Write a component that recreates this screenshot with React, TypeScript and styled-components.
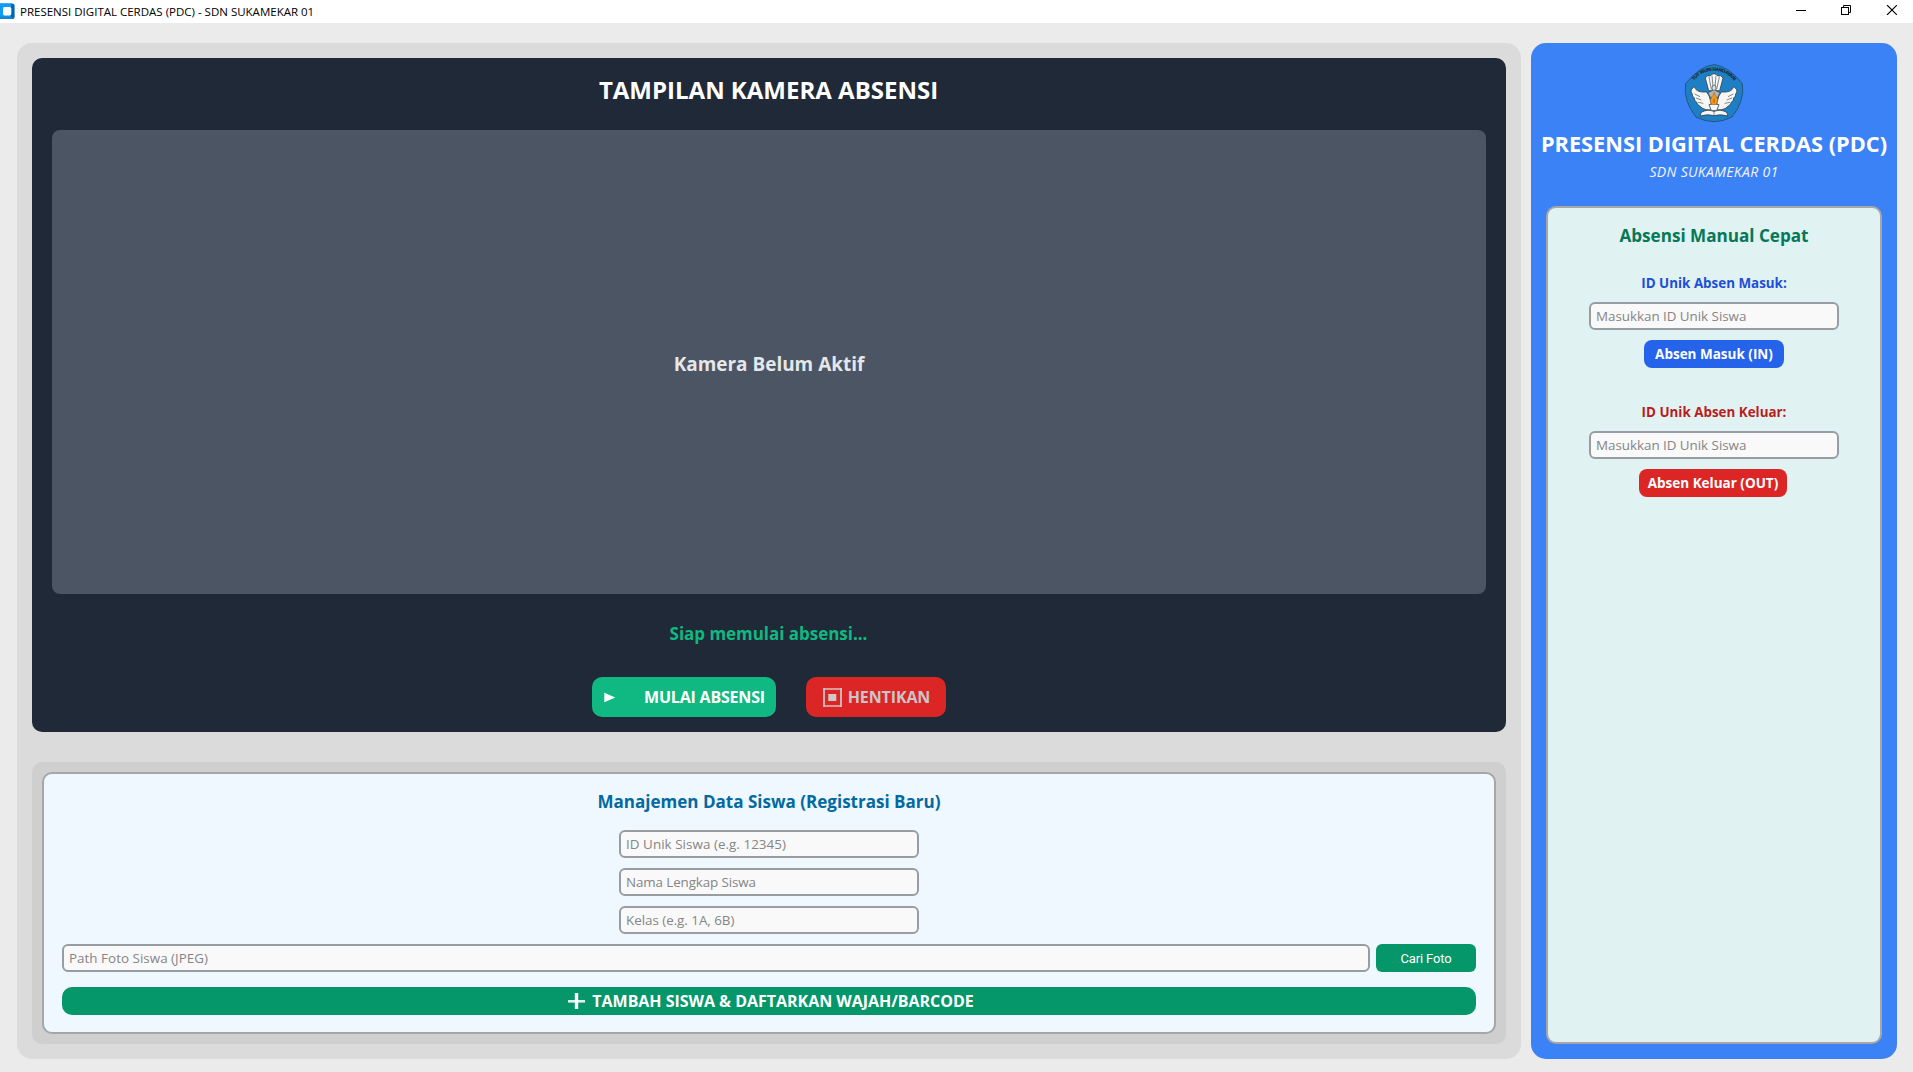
import React from 'react';
import styled, { createGlobalStyle } from 'styled-components';

const GlobalStyle = createGlobalStyle`
  * { box-sizing: border-box; }
  html, body { margin: 0; padding: 0; }
  body {
    background: #ebebeb;
    font-family: "Open Sans", "Noto Sans", sans-serif;
    overflow: hidden;
  }
`;

const Window = styled.div`
  display: flex;
  flex-direction: column;
  width: 100%;
  height: 100vh;
  background: #ebebeb;
`;

const TitleBar = styled.header`
  display: flex;
  align-items: center;
  flex: 0 0 23px;
  background: #ffffff;
  color: #000000;
`;

const TitleText = styled.span`
  flex: 1;
  padding-left: 5px;
  font-size: 11.5px;
  line-height: 23px;
  white-space: nowrap;
`;

const WindowControls = styled.div`
  display: flex;
  gap: 35px;
  padding: 0 16px 3px 0;
  svg { display: block; }
`;

const Main = styled.main`
  display: flex;
  flex: 1;
  gap: 10px;
  padding: 20px 16px 13px 17px;
`;

const LeftPanel = styled.section`
  display: flex;
  flex-direction: column;
  flex: 1;
  gap: 30px;
  padding: 15px;
  border-radius: 15px;
  background: #dbdbdb;
`;

const CameraCard = styled.div`
  display: flex;
  flex-direction: column;
  flex: 1;
  padding: 0 20px 15px;
  border-radius: 10px;
  background: #1f2937;
`;

const Label = styled.div<{
  $size: number;
  $color: string;
  $height: number;
  $track?: number;
  $weight?: number;
  $italic?: boolean;
}>`
  height: ${(p) => p.$height}px;
  line-height: ${(p) => p.$height}px;
  font-size: ${(p) => p.$size}px;
  font-weight: ${(p) => p.$weight ?? 700};
  font-style: ${(p) => (p.$italic ? 'italic' : 'normal')};
  letter-spacing: ${(p) => p.$track ?? 0}px;
  color: ${(p) => p.$color};
  text-align: center;
  white-space: nowrap;
`;

const CameraTitle = styled.div`
  height: 72px;
  padding: 14px 1px 0 0;
`;

const CameraView = styled.div`
  display: flex;
  align-items: center;
  justify-content: center;
  flex: 1;
  padding-top: 3px;
  border-radius: 8px;
  background: #4b5563;
`;

const StatusLine = styled.div`
  height: 83px;
  padding: 22px 1px 0 0;
`;

const ControlRow = styled.div`
  display: flex;
  justify-content: center;
  gap: 30px;
`;

const Button = styled.button<{
  $bg: string;
  $width?: number;
  $height?: number;
  $size?: number;
  $radius?: number;
  $track?: number;
  $color?: string;
  $padding?: string;
}>`
  display: flex;
  align-items: center;
  justify-content: center;
  width: ${(p) => (p.$width ? `${p.$width}px` : '100%')};
  height: ${(p) => p.$height ?? 28}px;
  padding: ${(p) => p.$padding ?? '0'};
  border: none;
  border-radius: ${(p) => p.$radius ?? 8}px;
  background: ${(p) => p.$bg};
  color: ${(p) => p.$color ?? '#ffffff'};
  font-family: inherit;
  font-size: ${(p) => p.$size ?? 13.5}px;
  font-weight: 700;
  letter-spacing: ${(p) => p.$track ?? 0}px;
  white-space: nowrap;
  svg { flex: none; display: block; }
`;

const CheckoutButton = styled(Button)`
  margin-right: 2px;
`;

const BrowseButton = styled(Button)`
  font-family: Roboto, sans-serif;
  font-weight: 400;
`;

const ManageFrame = styled.div`
  flex: 0 0 282px;
  padding: 10px;
  border-radius: 10px;
  background: #cfcfcf;
`;

const ManageCard = styled.div`
  display: flex;
  flex-direction: column;
  align-items: center;
  height: 100%;
  padding: 13px 18px 0;
  border: 2px solid #a6a6a6;
  border-radius: 10px;
  background: #f0f8ff;
`;

const FieldStack = styled.div`
  display: flex;
  flex-direction: column;
  align-items: center;
  gap: 10px;
  width: 100%;
  padding-top: 13px;
`;

const Field = styled.input<{ $width?: number; $track?: number }>`
  width: ${(p) => (p.$width ? `${p.$width}px` : 'auto')};
  flex: ${(p) => (p.$width ? 'none' : '1')};
  height: 28px;
  padding: 0 5px 1px;
  border: 2px solid #979da2;
  border-radius: 6px;
  background: #f9f9fa;
  font-family: inherit;
  font-size: 13.4px;
  letter-spacing: ${(p) => p.$track ?? 0}px;
  outline: none;
  &::placeholder { color: #858585; opacity: 1; }
`;

const PathRow = styled.div`
  display: flex;
  gap: 6px;
  width: 100%;
`;

const SubmitRow = styled.div`
  width: 100%;
  padding-top: 15px;
`;

const SidePanel = styled.aside`
  display: flex;
  flex-direction: column;
  align-items: center;
  flex: 0 0 366px;
  min-width: 0;
  padding: 21px 15px 15px;
  border-radius: 15px;
  background: #3b82f6;
`;

const Brand = styled.div`
  display: flex;
  flex-direction: column;
  align-items: center;
  flex: 0 0 142px;
  svg { display: block; overflow: visible; }
`;

const ManualCard = styled.div`
  display: flex;
  flex-direction: column;
  align-items: center;
  flex: 1;
  width: 100%;
  padding-top: 13px;
  border: 2px solid #a6a6a6;
  border-radius: 10px;
  background: #e0f2f1;
`;

const ManualGroup = styled.div<{ $top: number }>`
  display: flex;
  flex-direction: column;
  align-items: center;
  gap: 10px;
  padding-top: ${(p) => p.$top}px;
`;

function AppIcon() {
  return (
    <svg width="15" height="17" viewBox="0 0 15 17">
      <rect x="-2" y="0.4" width="16.6" height="15.6" rx="2.6" fill="#0067b5" />
      <path d="M0 0.4 H11.2 L10.6 16 H0 Z" fill="#109cfb" />
      <path d="M0 13.4 H11 L13 15.6 L12 16 H0 Z" fill="#1586d4" />
      <rect x="3" y="4" width="8.3" height="8.4" rx="1.6" fill="#ffffff" />
    </svg>
  );
}

function MinimizeIcon() {
  return (
    <svg width="10" height="10" viewBox="0 0 10 10">
      <path d="M0 5.5 H10" stroke="#000" strokeWidth="1" />
    </svg>
  );
}

function RestoreIcon() {
  return (
    <svg width="10" height="10" viewBox="0 0 10 10" fill="none" stroke="#000">
      <rect x="0.5" y="2.5" width="7" height="7" />
      <path d="M2.5 2.5 V0.5 H9.5 V7.5 H7.5" />
    </svg>
  );
}

function CloseIcon() {
  return (
    <svg width="11" height="10" viewBox="-1 0 11 10">
      <path d="M0 0 L10 10 M10 0 L0 10" stroke="#000" strokeWidth="1.1" />
    </svg>
  );
}

function PlayIcon() {
  return (
    <svg width="40" height="12" viewBox="0 0 40 12">
      <path d="M0.3 1.8 L11.3 6.5 L0.3 11.2 Z" fill="#ffffff" />
    </svg>
  );
}

function StopIcon() {
  return (
    <svg width="25" height="20" viewBox="0 0 25 20">
      <path d="M0 2 H19 M0 19 H19" stroke="#d89a9d" strokeWidth="2" />
      <path d="M1 1 V20 M18 1 V20" stroke="#cbc3c5" strokeWidth="1.8" />
      <rect x="5.3" y="7" width="8" height="7" fill="#cbc9ca" />
    </svg>
  );
}

function PlusIcon() {
  return (
    <svg width="24" height="16" viewBox="0 0 24 16">
      <path d="M0 8.3 H17" stroke="#dff1ea" strokeWidth="2.6" />
      <path d="M8.5 0 V16" stroke="#ffffff" strokeWidth="3.4" />
    </svg>
  );
}

function SchoolEmblem() {
  const ink = '#2b3f4d';
  return (
    <svg width="58" height="58" viewBox="15 12 174 174">
      <path
        d="M102 13.5 Q148 20 187 71 Q195 122 156 171 Q102 199 48 171 Q9 122 17 71 Q56 20 102 13.5 Z"
        fill="#1f7fc4"
        stroke="#245680"
        strokeWidth="3"
      />
      <path id="motto-arc" d="M30 86 A75 75 0 0 1 174 86" fill="none" />
      <text
        fontFamily="Liberation Sans, sans-serif"
        fontSize="14"
        fontWeight="700"
        letterSpacing="-0.9"
        fill="#17293a"
        stroke="#17293a"
        strokeWidth="0.5"
      >
        <textPath href="#motto-arc" startOffset="50%" textAnchor="middle">
          TUT WURI HANDAYANI
        </textPath>
      </text>
      <g fill="#f7f6f4" stroke={ink} strokeWidth="2.4" strokeLinejoin="round">
        <path d="M76 54 L82 47 L90 48 L96 43 L102 41 L108 43 L114 48 L122 47 L129 54 L119 92 L86 92 Z" />
        <path d="M43 79 C47 95 62 97 80 96 Q89 106 92 124 L97 150 L78 149 Q66 146 60 139 Q51 134 50 127 Q42 121 43 114 Q35 108 37 102 Q31 96 34 89 Z" />
        <path d="M161 79 C157 95 142 97 124 96 Q115 106 112 124 L107 150 L126 149 Q138 146 144 139 Q153 134 154 127 Q162 121 161 114 Q169 108 167 102 Q173 96 170 89 Z" />
        <path d="M64 157 Q84 146 102 154 Q120 146 140 157 L144 168 Q120 161 102 167 Q84 161 60 168 Z" />
        <path d="M87 134 Q102 129 117 134 L110 152 H94 Z" />
      </g>
      <g fill="none" stroke={ink} strokeWidth="1.8">
        <path d="M87 51 L94 88 M96 47 L99 80 M108 47 L105 80 M118 51 L110 88" />
        <path d="M44 102 L60 110 M48 114 L64 120 M54 127 L70 130 M160 102 L144 110 M156 114 L140 120 M150 127 L134 130" />
        <path d="M102 154 V166" />
      </g>
      <ellipse cx="102" cy="84" rx="6" ry="9" fill="#e4e2df" stroke={ink} strokeWidth="2" />
      <path d="M84 98 L102 90 L120 98 L113 112 H91 Z" fill="#b7b4ae" stroke={ink} strokeWidth="1.6" />
      <path
        d="M102 97 C104 107 114 112 113 123 C112 132 106 134 102 134 C98 134 91 131 91 122 C91 113 101 108 102 97 Z"
        fill="#f39a1c"
        stroke="#8a5a22"
        strokeWidth="1.4"
      />
      <path d="M102 113 Q108 122 103 130 Q97 126 102 113 Z" fill="#c9720e" />
    </svg>
  );
}

export default function App() {
  return (
    <>
      <GlobalStyle />
      <Window>
        <TitleBar>
          <AppIcon />
          <TitleText>PRESENSI DIGITAL CERDAS (PDC) - SDN SUKAMEKAR 01</TitleText>
          <WindowControls>
            <MinimizeIcon />
            <RestoreIcon />
            <CloseIcon />
          </WindowControls>
        </TitleBar>

        <Main>
          <LeftPanel>
            <CameraCard>
              <CameraTitle>
                <Label $size={24} $height={36} $color="#ffffff">TAMPILAN KAMERA ABSENSI</Label>
              </CameraTitle>
              <CameraView>
                <Label $size={18.95} $height={30} $color="#e5e7eb">Kamera Belum Aktif</Label>
              </CameraView>
              <StatusLine>
                <Label $size={16.95} $height={35} $color="#10b981">Siap memulai absensi...</Label>
              </StatusLine>
              <ControlRow>
                <Button $bg="#10b981" $width={184} $height={40} $size={16} $radius={10} $track={-0.2} $padding="0 0 0 1px">
                  <PlayIcon />
                  MULAI ABSENSI
                </Button>
                <Button $bg="#dc2626" $width={140} $height={40} $size={16} $radius={10} $track={-0.12} $color="#cac5c7" $padding="0 0 0 1px">
                  <StopIcon />
                  HENTIKAN
                </Button>
              </ControlRow>
            </CameraCard>

            <ManageFrame>
              <ManageCard>
                <Label $size={17.05} $height={30} $color="#0369a1">
                  Manajemen Data Siswa (Registrasi Baru)
                </Label>
                <FieldStack>
                  <Field $width={300} $track={0.05} placeholder="ID Unik Siswa (e.g. 12345)" />
                  <Field $width={300} $track={-0.11} placeholder="Nama Lengkap Siswa" />
                  <Field $width={300} $track={-0.03} placeholder="Kelas (e.g. 1A, 6B)" />
                  <PathRow>
                    <Field $track={0.03} placeholder="Path Foto Siswa (JPEG)" />
                    <BrowseButton $bg="#059669" $width={100} $size={13} $radius={6} $track={-0.15}>
                      Cari Foto
                    </BrowseButton>
                  </PathRow>
                </FieldStack>
                <SubmitRow>
                  <Button $bg="#059669" $size={16} $radius={10} $track={-0.03} $padding="0 0 0 4px">
                    <PlusIcon />
                    TAMBAH SISWA &amp; DAFTARKAN WAJAH/BARCODE
                  </Button>
                </SubmitRow>
              </ManageCard>
            </ManageFrame>
          </LeftPanel>

          <SidePanel>
            <Brand>
              <SchoolEmblem />
              <Label $size={21.75} $height={43} $color="#ffffff">
                PRESENSI DIGITAL CERDAS (PDC)
              </Label>
              <Label $size={14} $height={14} $track={0.33} $weight={400} $italic $color="#f3f4f6">
                SDN SUKAMEKAR 01
              </Label>
            </Brand>
            <ManualCard>
              <Label $size={17.1} $height={30} $color="#047857">Absensi Manual Cepat</Label>
              <ManualGroup $top={23}>
                <Label $size={13.4} $height={18} $color="#1d4ed8">ID Unik Absen Masuk:</Label>
                <Field $width={250} $track={-0.03} placeholder="Masukkan ID Unik Siswa" />
                <Button $bg="#2563eb" $width={140} $padding="0 0 1px">Absen Masuk (IN)</Button>
              </ManualGroup>
              <ManualGroup $top={35}>
                <Label $size={13.4} $height={18} $color="#b91c1c">ID Unik Absen Keluar:</Label>
                <Field $width={250} $track={-0.03} placeholder="Masukkan ID Unik Siswa" />
                <CheckoutButton $bg="#dc2626" $width={148}>Absen Keluar (OUT)</CheckoutButton>
              </ManualGroup>
            </ManualCard>
          </SidePanel>
        </Main>
      </Window>
    </>
  );
}
